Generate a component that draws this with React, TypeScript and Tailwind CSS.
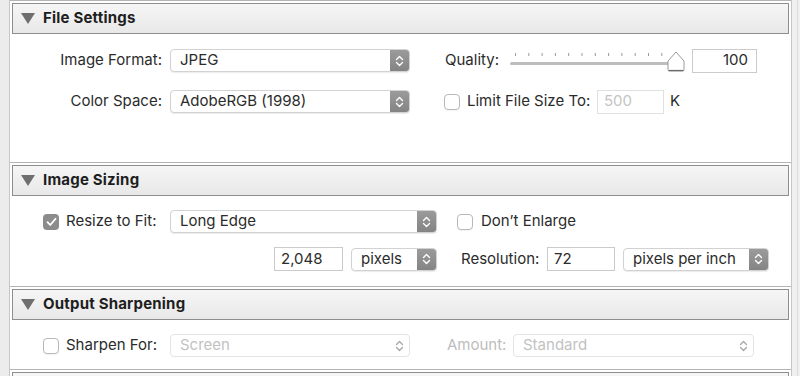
import React from "react";

const font = { fontFamily: "Inter, 'Noto Sans', 'Liberation Sans', sans-serif" };

function Chev({ color }: { color: string }) {
  return (
    <svg width="9" height="14" viewBox="0 0 9 14" fill="none" stroke={color} strokeWidth="1.4" strokeLinecap="round" strokeLinejoin="round">
      <path d="M1.5 5.5 L4.5 2.5 L7.5 5.5" />
      <path d="M1.5 8.5 L4.5 11.5 L7.5 8.5" />
    </svg>
  );
}

function Select({ w, text, disabled }: { w: string; text: string; disabled?: boolean }) {
  return (
    <div
      className={`${w} flex h-[23px] shrink-0 items-stretch overflow-hidden rounded-[4px] border bg-white ${
        disabled ? "border-[#e4e4e4]" : "border-[#d2d2d2] shadow-[0_1px_1px_rgba(0,0,0,0.08)]"
      }`}
    >
      <span className={`flex flex-1 items-center pl-[9px] text-[15px] ${disabled ? "text-[#c2c2c2]" : "text-[#2b2b2b]"}`}>{text}</span>
      {disabled ? (
        <span className="flex w-[19px] items-center justify-center">
          <Chev color="#a8a8a8" />
        </span>
      ) : (
        <span className="flex w-[19px] items-center justify-center bg-gradient-to-b from-[#9b9b9b] to-[#848484]">
          <Chev color="#ffffff" />
        </span>
      )}
    </div>
  );
}

function Input({ w, text, right, disabled }: { w: string; text: string; right?: boolean; disabled?: boolean }) {
  return (
    <div
      className={`${w} flex h-[24px] shrink-0 items-center border bg-white text-[15px] ${right ? "justify-end pr-[8px]" : "pl-[6px]"} ${
        disabled ? "border-[#e0e0e0] text-[#c4c4c4]" : "border-[#cbcbcb] text-[#2b2b2b]"
      }`}
    >
      {text}
    </div>
  );
}

function Check({ checked }: { checked?: boolean }) {
  return checked ? (
    <div className="flex h-[16px] w-[16px] shrink-0 items-center justify-center rounded-[4px] bg-[#8c8c8c]">
      <svg width="11" height="10" viewBox="0 0 11 10" fill="none" stroke="#fff" strokeWidth="1.8" strokeLinecap="round" strokeLinejoin="round">
        <path d="M1.5 5.2 L4.2 8 L9.5 1.8" />
      </svg>
    </div>
  ) : (
    <div className="h-[16px] w-[16px] shrink-0 rounded-[4px] border border-[#b9b9b9] bg-white shadow-[0_1px_1px_rgba(0,0,0,0.05)]" />
  );
}

function Header({ title }: { title: string }) {
  return (
    <div className="mx-[2px] mt-[2px] flex h-[31px] shrink-0 items-center border border-[#8e8e8e] bg-gradient-to-b from-[#f6f6f6] to-[#e8e8e8]">
      <svg className="ml-[8px] shrink-0" width="14" height="11" viewBox="0 0 14 11">
        <path d="M0 0 H14 L7 11 Z" fill="#6f6f6f" />
      </svg>
      <span className="ml-[8px] text-[15px] font-bold tracking-[0.2px] text-[#1e1e1e]">{title}</span>
    </div>
  );
}

function Sep() {
  return <div className="h-px shrink-0 bg-[#b4b4b4]" />;
}

function Slider() {
  const ticks = Array.from({ length: 13 }, (_, i) => i);
  return (
    <div className="h-[24px] w-[175px] shrink-0">
      <svg width="175" height="24" viewBox="0 0 175 24">
        {ticks.map((i) => (
          <rect key={i} x={5 + i * 13.3} y={4} width="1" height="3" fill="#9a9a9a" />
        ))}
        <rect x="0" y="13" width="166" height="3" rx="1.5" fill="#bdbdbd" />
        <path d="M166 3 L174 12 L174 20.5 Q174 22 172.5 22 L159.5 22 Q158 22 158 20.5 L158 12 Z" fill="#ffffff" stroke="#9a9a9a" strokeWidth="1" />
        <path d="M158.5 21.5 L173.5 21.5" stroke="#6a6a6a" strokeWidth="1.2" />
      </svg>
    </div>
  );
}

export default function App() {
  return (
    <div className="flex h-[376px] w-[800px] overflow-hidden bg-[#ececec] text-[#2b2b2b]" style={font}>
      <div className="w-[9px] shrink-0 bg-[#ececec]" />
      <div className="flex w-[783px] shrink-0 flex-col border-x border-[#c6c6c6] bg-white">
        {/* File Settings */}
        <Sep />
        <Header title="File Settings" />
        <div className="flex h-[128px] shrink-0 flex-col">
          <div className="mt-[15px] flex h-[23px] items-center">
            <span className="w-[152px] shrink-0 text-right text-[15px]">Image Format:</span>
            <div className="ml-[8px]">
              <Select w="w-[240px]" text="JPEG" />
            </div>
            <span className="ml-[35px] w-[65px] shrink-0 text-[15px]">Quality:</span>
            <Slider />
            <div className="ml-[7px]">
              <Input w="w-[65px]" text="100" right />
            </div>
          </div>
          <div className="mt-[18px] flex h-[23px] items-center">
            <span className="w-[152px] shrink-0 text-right text-[15px]">Color Space:</span>
            <div className="ml-[8px]">
              <Select w="w-[240px]" text="AdobeRGB (1998)" />
            </div>
            <div className="ml-[34px]">
              <Check />
            </div>
            <span className="ml-[7px] w-[130px] shrink-0 text-[15px]">Limit File Size To:</span>
            <Input w="w-[67px]" text="500" disabled />
            <span className="ml-[6px] text-[15px]">K</span>
          </div>
        </div>

        {/* Image Sizing */}
        <Sep />
        <Header title="Image Sizing" />
        <div className="flex h-[90px] shrink-0 flex-col">
          <div className="mt-[14px] flex h-[23px] items-center">
            <div className="ml-[33px]">
              <Check checked />
            </div>
            <span className="ml-[7px] w-[104px] shrink-0 text-[15px]">Resize to Fit:</span>
            <Select w="w-[267px]" text="Long Edge" />
            <div className="ml-[20px]">
              <Check />
            </div>
            <span className="ml-[8px] text-[15px]">Don’t Enlarge</span>
          </div>
          <div className="mt-[14px] flex h-[24px] items-center">
            <div className="ml-[264px]">
              <Input w="w-[69px]" text="2,048" />
            </div>
            <div className="ml-[8px]">
              <Select w="w-[86px]" text="pixels" />
            </div>
            <span className="ml-[24px] w-[86px] shrink-0 text-[15px]">Resolution:</span>
            <Input w="w-[68px]" text="72" />
            <div className="ml-[8px]">
              <Select w="w-[146px]" text="pixels per inch" />
            </div>
          </div>
        </div>

        {/* Output Sharpening */}
        <Sep />
        <Header title="Output Sharpening" />
        <div className="flex h-[49px] shrink-0 flex-col">
          <div className="mt-[14px] flex h-[23px] items-center">
            <div className="ml-[33px]">
              <Check />
            </div>
            <span className="ml-[7px] w-[104px] shrink-0 text-[15px]">Sharpen For:</span>
            <Select w="w-[240px]" text="Screen" disabled />
            <span className="ml-[37px] w-[66px] shrink-0 text-[15px] text-[#bdbdbd]">Amount:</span>
            <Select w="w-[241px]" text="Standard" disabled />
          </div>
        </div>

        <Sep />
        <Header title="" />
      </div>
      <div className="flex w-[8px] shrink-0 bg-[#f0f0f0]">
        <div className="ml-[5px] w-px bg-[#dcdcdc]" />
      </div>
    </div>
  );
}
